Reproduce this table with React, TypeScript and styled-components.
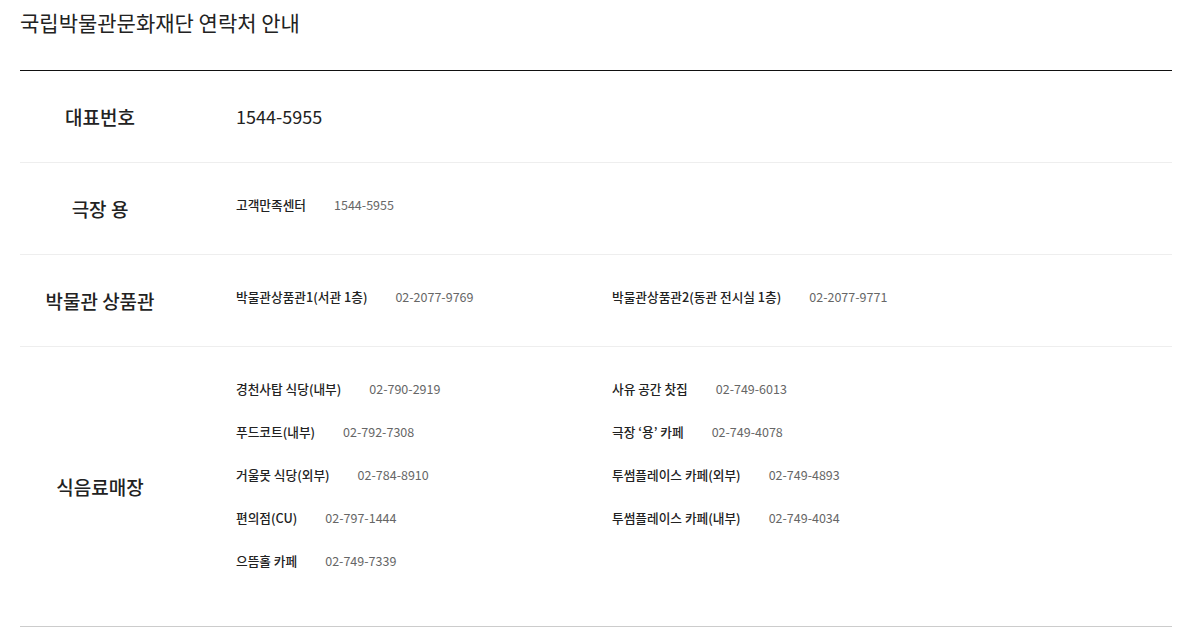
import React, { FC } from "react"
import styled, { createGlobalStyle } from "styled-components"

const GlobalStyle = createGlobalStyle`
  body {
    margin: 0;
    background: #fff;
    font-family: "Noto Sans CJK KR", "Noto Sans", sans-serif;
    color: #222;
  }
`

const Wrap = styled.div`
  padding: 0 20px;
`

const Title = styled.h2`
  margin: 0;
  padding: 8px 0 34px;
  font-size: 21px;
  line-height: 28px;
  font-weight: 400;
  color: #222;
  border-bottom: 1px solid #111;
`

const Row = styled.div<{ $last?: boolean }>`
  display: grid;
  grid-template-columns: 160px 1fr;
  border-bottom: 1px solid ${p => (p.$last ? "#ccc" : "#eee")};
`

const Label = styled.div`
  display: flex;
  align-items: center;
  justify-content: center;
  font-size: 19px;
  font-weight: 500;
  color: #222;
`

const Content = styled.div<{ $last?: boolean }>`
  padding: 32px 0 ${p => (p.$last ? "32px" : "16px")} 56px;
`

const MainNumber = styled.div`
  font-size: 18px;
  line-height: 26px;
  font-weight: 400;
  margin-bottom: 17px;
`

const List = styled.ul`
  display: grid;
  grid-template-columns: 376px 376px;
  margin: 0;
  padding: 0;
  list-style: none;
`

const Item = styled.li`
  display: flex;
  gap: 28px;
  height: 20px;
  margin-bottom: 23px;
  line-height: 20px;
`

const Name = styled.span`
  font-size: 12.7px;
  font-weight: 500;
  color: #222;
`

const Phone = styled.span`
  color: #666;
  font-size: 12.5px;
`

type Contact = [string, string]

const sections: { label: string; items: Contact[] }[] = [
  { label: "극장 용", items: [["고객만족센터", "1544-5955"]] },
  {
    label: "박물관 상품관",
    items: [
      ["박물관상품관1(서관 1층)", "02-2077-9769"],
      ["박물관상품관2(동관 전시실 1층)", "02-2077-9771"]
    ]
  },
  {
    label: "식음료매장",
    items: [
      ["경천사탑 식당(내부)", "02-790-2919"],
      ["사유 공간 찻집", "02-749-6013"],
      ["푸드코트(내부)", "02-792-7308"],
      ["극장 ‘용’ 카페", "02-749-4078"],
      ["거울못 식당(외부)", "02-784-8910"],
      ["투썸플레이스 카페(외부)", "02-749-4893"],
      ["편의점(CU)", "02-797-1444"],
      ["투썸플레이스 카페(내부)", "02-749-4034"],
      ["으뜸홀 카페", "02-749-7339"]
    ]
  }
]

const App: FC = () => {
  return (
    <Wrap>
      <GlobalStyle />
      <Title>국립박물관문화재단 연락처 안내</Title>
      <Row>
        <Label>대표번호</Label>
        <Content>
          <MainNumber>1544-5955</MainNumber>
        </Content>
      </Row>
      { sections.map(({ label, items }, i) => {
        const last = i === sections.length - 1
        return (
          <Row key={ label } $last={ last }>
            <Label>{ label }</Label>
            <Content $last={ last }>
              <List>
                { items.map(([name, phone]) => (
                  <Item key={ name }>
                    <Name>{ name }</Name>
                    <Phone>{ phone }</Phone>
                  </Item>
                )) }
              </List>
            </Content>
          </Row>
        )
      }) }
    </Wrap>
  )
}

export default App
